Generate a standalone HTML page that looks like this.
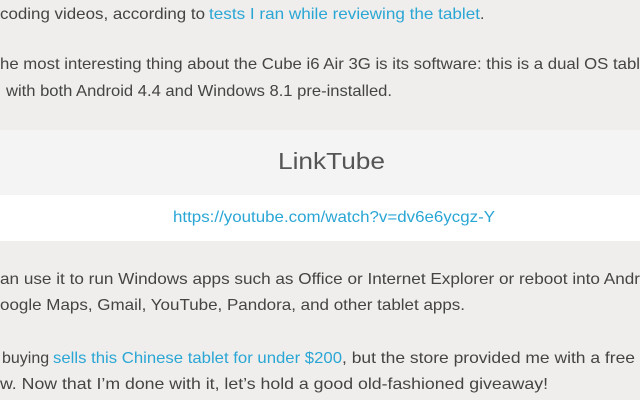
<!DOCTYPE html>
<html><head><meta charset="utf-8"><style>
html,body{margin:0;padding:0;width:640px;height:400px;overflow:hidden;background:#efeeec;}
svg{display:block}
text{font-family:"Liberation Sans",sans-serif;font-size:16px;fill:#444;}
.l{fill:#2aa6d5;}
</style></head><body>
<svg width="640" height="400" viewBox="0 0 640 400">
<rect x="0" y="130" width="640" height="65" fill="#f4f4f4"/>
<rect x="0" y="195" width="640" height="46" fill="#ffffff"/>
<text x="0" y="19" textLength="205" lengthAdjust="spacingAndGlyphs">coding videos, according to</text>
<text class="l" x="209" y="19" textLength="271" lengthAdjust="spacingAndGlyphs">tests I ran while reviewing the tablet</text>
<text x="480" y="19">.</text>
<text x="0" y="69" textLength="640" lengthAdjust="spacingAndGlyphs">he most interesting thing about the Cube i6 Air 3G is its software: this is a dual OS tabl</text>
<text x="6" y="96" textLength="386" lengthAdjust="spacingAndGlyphs">with both Android 4.4 and Windows 8.1 pre-installed.</text>
<text x="278" y="169" textLength="107" lengthAdjust="spacingAndGlyphs" style="font-size:23px;fill:#555">LinkTube</text>
<text class="l" x="173" y="222" textLength="322" lengthAdjust="spacingAndGlyphs">https://youtube.com/watch?v=dv6e6ycgz-Y</text>
<text x="0" y="284" textLength="640" lengthAdjust="spacingAndGlyphs">an use it to run Windows apps such as Office or Internet Explorer or reboot into Andr</text>
<text x="0" y="310" textLength="465" lengthAdjust="spacingAndGlyphs">oogle Maps, Gmail, YouTube, Pandora, and other tablet apps.</text>
<text x="2" y="363">buying</text>
<text class="l" x="53" y="363" textLength="289" lengthAdjust="spacingAndGlyphs">sells this Chinese tablet for under $200</text>
<text x="342" y="363" textLength="293" lengthAdjust="spacingAndGlyphs">, but the store provided me with a free</text>
<text x="0" y="389" textLength="548" lengthAdjust="spacingAndGlyphs">w. Now that I’m done with it, let’s hold a good old-fashioned giveaway!</text>
</svg>
</body></html>
